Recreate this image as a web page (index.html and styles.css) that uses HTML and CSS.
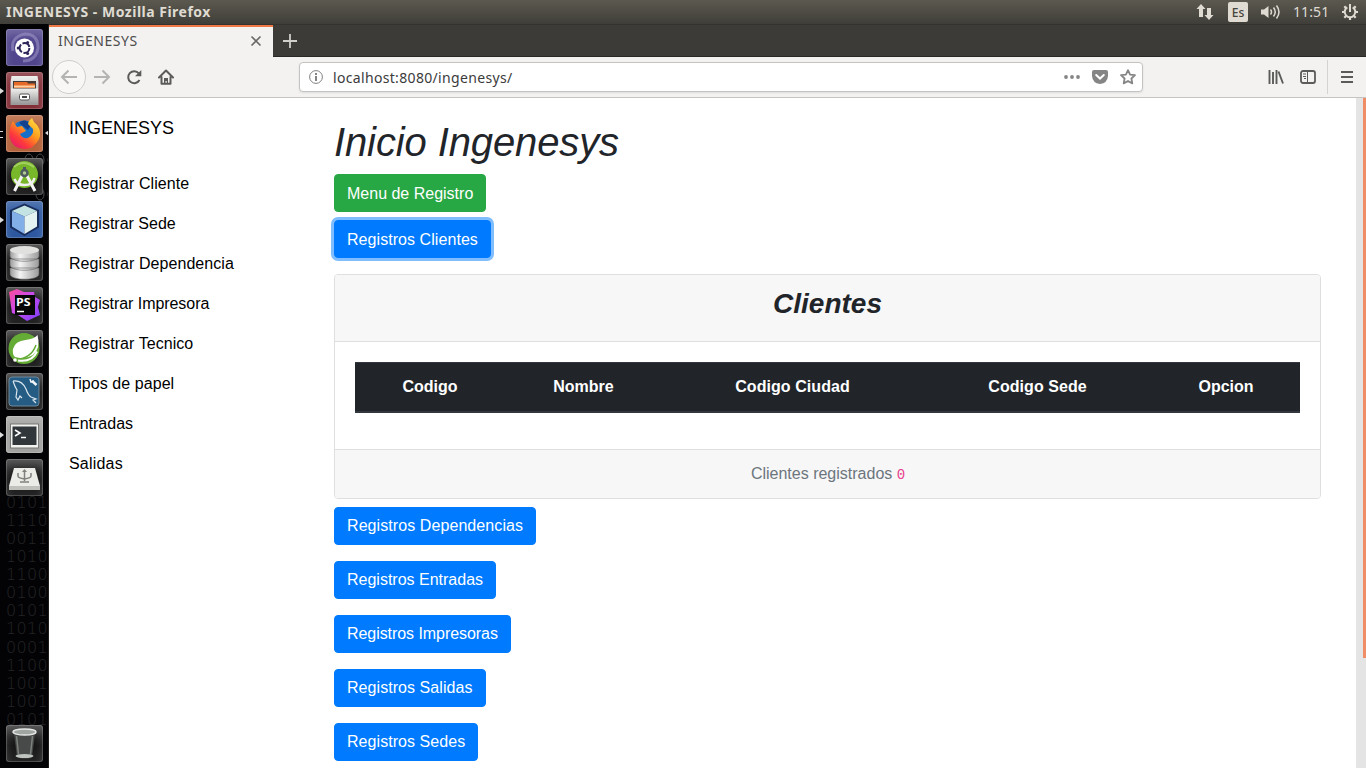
FILE: index.html
```html
<!DOCTYPE html>
<html lang="es">
<head>
<meta charset="utf-8">
<title>INGENESYS</title>
<link rel="stylesheet" href="styles.css">
</head>
<body>
<svg width="0" height="0" class="defs">
  <defs>
    <linearGradient id="silver" x1="0" y1="0" x2="0" y2="1"><stop offset="0" stop-color="#f0f0ee"/><stop offset="1" stop-color="#999"/></linearGradient>
    <linearGradient id="disk" x1="0" y1="0" x2="1" y2="0"><stop offset="0" stop-color="#9c9c9c"/><stop offset=".35" stop-color="#f4f4f4"/><stop offset="1" stop-color="#9a9a9a"/></linearGradient>
    <linearGradient id="fox" x1="1" y1="0" x2="0.2" y2="1"><stop offset="0" stop-color="#fff04a"/><stop offset=".45" stop-color="#ff9a1c"/><stop offset=".75" stop-color="#ff3a3c"/><stop offset="1" stop-color="#e5176d"/></linearGradient>
    <linearGradient id="storm" x1="0" y1="0" x2="1" y2="1"><stop offset="0" stop-color="#ff4b96"/><stop offset=".45" stop-color="#c94bf0"/><stop offset="1" stop-color="#7b3df5"/></linearGradient>
  </defs>
</svg>
<header class="panel">
  <span class="panel-title">INGENESYS - Mozilla Firefox</span>
  <div class="indicators">
    <svg width="18" height="18" viewBox="0 0 18 18" fill="#dfdbd2"><path d="M5 1l4.500 5H7v8H3V6H.5zM13 17l-4.500-5H11V5h4v7h2.500z"/></svg>
    <span class="lang">Es</span>
    <svg class="vol" width="21" height="18" viewBox="0 0 21 18"><path d="M1 6.500h3L8.500 3v12L4 11.500H1z" fill="#dfdbd2"/><path d="M10.500 6.500q2 2.500 0 5M13.500 4.500q3.500 4.500 0 9M16.500 2.500q5 6.500 0 13" fill="none" stroke="#dfdbd2" stroke-width="1.500"/></svg>
    <span class="clock">11:51</span>
    <svg width="18" height="18" viewBox="0 0 18 18" fill="none" stroke="#dfdbd2"><path d="M6.300 4.300a5.300 5.300 0 1 0 5.400 0" stroke-width="2"/><path d="M9 1v8" stroke-width="2"/><path d="M1 9h2.500M14.500 9H17M9 14.500V17M3.300 14.700l1.700-1.700M14.700 14.700L13 13M3.300 3.300L5 5M14.700 3.300L13 5" stroke-width="2.200"/></svg>
  </div>
</header>
<div class="desktop">
  <nav class="launcher">
    <svg class="rings" width="49" height="60" viewBox="0 0 49 60" fill="none" stroke="#4b4b4d"><ellipse cx="29" cy="10" rx="4" ry="6"/><ellipse cx="40" cy="10" rx="4" ry="6"/><ellipse cx="40" cy="44" rx="4" ry="6"/><path d="M49 5q-2 5 0 10M49 38q-2 6 0 12"/></svg>
    <pre class="bits">0101
1110
0011
1010
1100
0100
0101
1010
0001
1100
1001
1001
0101</pre>
    <div class="tile purple"><svg viewBox="0 0 37 37"><path d="M7 22Q4 8 19 5q13 0 13 14-2 13-15 13" fill="none" stroke="#a9a0cf" stroke-width="3" opacity=".5"/><circle cx="18.500" cy="19" r="9.500" fill="#fff"/><circle cx="18.500" cy="19" r="4.900" fill="none" stroke="#2d2459" stroke-width="2" stroke-dasharray="8.600 1.600"/><g fill="#2d2459"><circle cx="12.200" cy="19" r="1.500"/><circle cx="21.600" cy="13.400" r="1.500"/><circle cx="21.600" cy="24.600" r="1.500"/></g></svg></div>
    <div class="tile red run"><svg viewBox="0 0 37 37"><path d="M5.500 4h26l1 6v23h-28V10z" fill="url(#silver)"/><path d="M7 9h23v8H7z" fill="#443b38"/><path d="M8 10h13l1 1.500h7V16H8z" fill="#e66b28"/><path d="M8 13.500h21v2H8z" fill="#ffd1a2"/><path d="M5 16.500h27V32H5z" fill="url(#silver)"/><rect x="13.500" y="22" width="10" height="6" rx="1.500" fill="#fff" stroke="#555"/><path d="M16 25h5" stroke="#444" stroke-width="2"/></svg></div>
    <div class="tile orange run2 active"><svg viewBox="0 0 37 37"><circle cx="18" cy="18" r="12.500" fill="#176fc8"/><path d="M13 8q6-6 12 2l-3 5z" fill="#14418c"/><path d="M7 6l4 6 5-1 4 5-6 3q2 5 8 4 6-3 5-9l-5-5q1-4 4-6 1 4 5 7 5 7 2 14-5 10-15 10Q6 33 3.500 22 3 12 7 6z" fill="url(#fox)"/></svg></div>
    <div class="tile dark"><svg viewBox="0 0 37 37"><circle cx="18.500" cy="16.500" r="13.500" fill="#78b72a"/><path d="M8 9q9-8 20 0" fill="none" stroke="#a3d161" stroke-width="2"/><path d="M17 16L8.500 33M20 16L29 33" stroke="#f4f4f4" stroke-width="3"/><path d="M8.500 21q2 6 10 6 8.500 0 10-7" fill="none" stroke="#f1f1f1" stroke-width="2.500"/><circle cx="18.500" cy="15" r="3" fill="#b1cc8e" stroke="#4f5960" stroke-width="2.500"/><path d="M18.500 9v4" stroke="#4f5960" stroke-width="3"/></svg></div>
    <div class="tile blue run"><svg viewBox="0 0 37 37"><path d="M18.500 2.500L33 9v17.500L18.500 35 4 26.500V9z" fill="#182c5b"/><path d="M18.500 4.500L31 10l-12.500 5.500L6 10z" fill="#c4e4e4"/><path d="M6 10l12.500 5.500V33L6 25.500z" fill="#83afe9"/><path d="M18.500 15.500L31 10v15.500L18.500 33z" fill="#e4f3f1"/></svg></div>
    <div class="tile dark"><svg viewBox="0 0 37 37"><path d="M4 24v6c0 7 29 7 29 0v-6zM4 15v6c0 7 29 7 29 0v-6zM4 6v6c0 7 29 7 29 0V6z" fill="url(#disk)" stroke="#606060" stroke-width=".6"/><ellipse cx="18.500" cy="6" rx="14.500" ry="4" fill="#e0e0df"/></svg></div>
    <div class="tile dark"><svg viewBox="0 0 37 37"><path d="M3 5l8-3 7 3 10 0 1 5 5 3-2 7 2 8-13 6-9-6-6-2z" fill="url(#storm)"/><path d="M9 8h20v20H9z" fill="#070607"/><text x="10" y="18.500" textLength="14.500" lengthAdjust="spacingAndGlyphs" class="ps">PS</text><path d="M11 24.500h7" stroke="#fff" stroke-width="1.500"/></svg></div>
    <div class="tile dark"><svg viewBox="0 0 37 37"><circle cx="18" cy="18.500" r="15.500" fill="#65ac36"/><path d="M31.500 5q-3 4-12 5Q9 11 7 19q-1 5 2 8 10 3 18-2 8-7 4.500-20z" fill="#fff"/><path d="M9 29.500Q25 29 30 15" fill="none" stroke="#65ac36" stroke-width="1.500"/><path d="M12 30.500q14 2 19-9" fill="none" stroke="#fff" stroke-width="2"/><circle cx="9" cy="30" r="1.800" fill="#fff"/></svg></div>
    <div class="tile dark"><svg viewBox="0 0 37 37"><rect x="3" y="4" width="30" height="29" rx="3" fill="#245c84" stroke="#6f8a9d"/><path d="M7 8q9-1 13 8 2 6 5 8l5 2-3 1 3 3M7 8q2 6 4 9l-1 7 2 3 2-4 2 2" fill="none" stroke="#d9e5ed" stroke-width="1.200"/><path d="M26 8l4.500 4" stroke="#f2f5f7" stroke-width="2.500"/><path d="M24 6l1 3 3-1" fill="none" stroke="#f2f5f7" stroke-width="1.500"/></svg></div>
    <div class="tile gray run"><svg viewBox="0 0 37 37"><rect x="4.500" y="8" width="28" height="24" fill="#f2f2ef" stroke="#777"/><rect x="6.500" y="10.500" width="24" height="18.500" fill="#30363a"/><path d="M9 14l5 3-5 3" fill="none" stroke="#fff" stroke-width="1.600"/><path d="M15 21.500h5" stroke="#fff" stroke-width="1.500"/></svg></div>
    <div class="tile dark"><svg viewBox="0 0 37 37"><path d="M8 9h21l5 18v4H3v-4z" fill="#ebebe8"/><path d="M3 27h31v4H3z" fill="#c0c0bd"/><path d="M18.500 22V11M12 14v3q0 2 6.500 3 6.500-1 6.500-3v-3M14 23h9" fill="none" stroke="#80807e" stroke-width="1.500"/><path d="M16 13l2.500-3 2.500 3z" fill="#80807e"/></svg></div>
    <div class="tile dark trash"><svg viewBox="0 0 37 37"><path d="M8 8h21l-3 24q-7 3-15 0z" fill="#474a48"/><path d="M10.500 11l2 18M26.500 11l-2 18" stroke="#7d817e" stroke-width="1.500"/><ellipse cx="18.500" cy="7" rx="11.500" ry="3" fill="#a1a5a2" stroke="#e4e7e5" stroke-width="1.500"/><ellipse cx="18.500" cy="31" rx="9" ry="2" fill="#bec3bf"/></svg></div>
  </nav>
  <div class="browser">
    <div class="tabs">
      <div class="tab"><span class="tab-name">INGENESYS</span><svg width="12" height="12" viewBox="0 0 12 12"><path d="M1.500 1.500l9 9M10.500 1.500l-9 9" stroke="#696969" stroke-width="1.600"/></svg></div>
      <svg class="plus" width="14" height="14" viewBox="0 0 14 14"><path d="M7 0v14M0 7h14" stroke="#d0cfca" stroke-width="1.800"/></svg>
    </div>
    <div class="toolbar">
      <div class="back"><svg width="18" height="16" viewBox="0 0 18 16"><path d="M17 8H2M8.500 1.500L2 8l6.500 6.500" fill="none" stroke="#b4b4b3" stroke-width="2"/></svg></div>
      <svg class="forward" width="18" height="16" viewBox="0 0 18 16"><path d="M1 8h15M9.500 1.500L16 8l-6.500 6.500" fill="none" stroke="#b4b4b3" stroke-width="2"/></svg>
      <svg class="reload" width="16" height="16" viewBox="0 0 16 16"><path d="M12.800 4.300A6 6 0 1 0 13.500 11" fill="none" stroke="#5b5b59" stroke-width="2"/><path d="M15.300 1v6.300H9z" fill="#5b5b59"/></svg>
      <svg class="home" width="16" height="16" viewBox="0 0 16 16"><path d="M1 8.500L8 1.500l7 7M3.500 8v6.800h9V8" fill="none" stroke="#5b5b59" stroke-width="2" stroke-linejoin="round" stroke-linecap="round"/><path d="M6 9h4v6H8.800v-3H7.500v3H6z" fill="#5b5b59"/></svg>
      <div class="url">
        <svg width="14" height="14" viewBox="0 0 14 14"><circle cx="7" cy="7" r="6.400" fill="none" stroke="#818181"/><path d="M7 6v5M7 3v2" stroke="#777" stroke-width="1.800"/></svg>
        <span class="address">localhost:8080/ingenesys/</span>
        <svg width="16" height="16" viewBox="0 0 16 16" fill="#858585"><circle cx="2" cy="8" r="1.900"/><circle cx="8" cy="8" r="1.900"/><circle cx="14" cy="8" r="1.900"/></svg>
        <svg class="pocket" width="16" height="16" viewBox="0 0 16 16"><path d="M2 1h12q2 0 2 2v4q-.5 7-8 8Q.5 14 0 7V3q0-2 2-2z" fill="#858585"/><path d="M4.200 6L8 9.600 11.800 6" fill="none" stroke="#fff" stroke-width="2" stroke-linecap="round"/></svg>
        <svg class="star" width="16" height="16" viewBox="0 0 16 16"><path d="M8 1.200l2.100 4.400 4.900.6-3.600 3.300.9 4.900L8 12l-4.300 2.400.9-4.900L1 6.200l4.900-.6z" fill="none" stroke="#858585" stroke-width="1.800" stroke-linejoin="round"/></svg>
      </div>
      <svg class="library" width="16" height="16" viewBox="0 0 16 16"><path d="M1.500 1v14M5 3v12M8.500 1v14M10.500 2.500L15 14.500" stroke="#5b5b59" stroke-width="1.900" fill="none"/></svg>
      <svg class="sidebtn" width="16" height="16" viewBox="0 0 16 16"><rect x="1" y="2" width="14" height="12" rx="2" fill="none" stroke="#5b5b59" stroke-width="1.800"/><path d="M7.500 2v12" stroke="#5b5b59"/><path d="M3 5h3M3 7.500h3M4 9.500h2" stroke="#5b5b59"/></svg>
      <div class="menu"><svg width="12" height="12" viewBox="0 0 12 12"><path d="M0 1h12M0 6h12M0 11h12" stroke="#5b5b59" stroke-width="2"/></svg></div>
    </div>
    <div class="viewport">
      <aside class="sidebar">
        <div class="brand">INGENESYS</div>
        <ul>
          <li class="wide">Registrar Cliente</li><li>Registrar Sede</li><li class="wide">Registrar Dependencia</li><li class="tight">Registrar Impresora</li><li class="wide">Registrar Tecnico</li><li class="wide">Tipos de papel</li><li>Entradas</li><li class="wider">Salidas</li>
        </ul>
      </aside>
      <main class="content">
        <h1>Inicio Ingenesys</h1>
        <button class="btn low green">Menu de Registro</button>
        <button class="btn low focused wide">Registros Clientes</button>
        <section class="card">
          <div class="card-header"><h3>Clientes</h3></div>
          <div class="card-body">
            <table>
              <colgroup><col class="c1"><col class="c2"><col class="c3"><col class="c4"><col class="c5"></colgroup>
              <thead><tr><th>Codigo</th><th>Nombre</th><th class="wide">Codigo Ciudad</th><th class="wide">Codigo Sede</th><th>Opcion</th></tr></thead>
            </table>
          </div>
          <div class="card-footer">Clientes registrados <code>0</code></div>
        </section>
        <div class="stack">
          <button class="btn wide2">Registros Dependencias</button>
          <button class="btn">Registros Entradas</button>
          <button class="btn tight">Registros Impresoras</button>
          <button class="btn wide">Registros Salidas</button>
          <button class="btn wide">Registros Sedes</button>
        </div>
      </main>
      <div class="scrollbar"><div class="thumb"></div></div>
    </div>
  </div>
</div>
</body>
</html>
```
FILE: styles.css
```css
* { box-sizing: border-box; }
body { margin: 0; width: 1366px; height: 768px; overflow: hidden; display: flex; flex-direction: column; font-family: "Liberation Sans", Arial, sans-serif; font-size: 16px; line-height: 24px; color: #212529; background: #fff; }
svg { display: block; flex: none; }
.defs { position: absolute; }
.panel { height: 24px; flex: none; display: flex; justify-content: space-between; align-items: center; padding: 0 7px 0 6px; background: linear-gradient(#5b594f, #3f3e39); font-family: "Noto Sans", sans-serif; color: #dfdbd2; }
.panel-title { font-weight: 700; font-size: 14px; letter-spacing: .5px; white-space: nowrap; }
.indicators { display: flex; align-items: center; }
.lang { width: 20px; height: 20px; margin: 0 13px 0 13px; border-radius: 2px; background: #dfdbd2; color: #45433d; font-size: 12px; font-weight: 500; line-height: 21px; text-align: center; }
.lang { position: relative; left: 1px; }
.vol { margin-right: 12px; }
.clock { width: 35px; margin-right: 13px; font-size: 14px; letter-spacing: .1px; white-space: nowrap; }
.desktop { flex: 1; min-height: 0; display: flex; }
.launcher { position: relative; width: 49px; flex: none; padding: 5px 0 6px 5.5px; display: flex; flex-direction: column; gap: 6px; background: #030305; border-right: 1px solid #1d1c1b; overflow: hidden; }
.rings { position: absolute; left: 0; top: 126px; }
.bits { position: absolute; left: 6px; top: 470px; margin: 0; font: 200 16px/18.07px "DejaVu Sans", sans-serif; letter-spacing: .3px; color: #242426; }
.tile { position: relative; width: 37px; height: 37px; flex: none; border-radius: 3px; box-shadow: inset 0 0 0 1px rgba(255,255,255,.18), inset 0 6px 8px rgba(255,255,255,.2); }
.tile svg { width: 37px; height: 37px; }
.purple { background: #51468d; }
.red { background: #832f38; }
.orange { background: #b5633b; }
.blue { background: #2d589f; }
.dark { background: linear-gradient(#343434, #171717 55%, #242424); }
.gray { background: #a2a2a0; }
.trash { margin-top: auto; }
.run::before, .run2::before { content: ""; position: absolute; left: -6px; top: 16px; border: 3px solid transparent; border-left: 4px solid #ddd; border-right: 0; }
.run2::before { width: 3px; height: 5px; border: solid #ddd; border-width: 1.5px 0; }
.active::after { content: ""; position: absolute; left: 39px; top: 15px; border: 3px solid transparent; border-right: 4px solid #ddd; border-left: 0; }
.ps { font: 700 11px "Open Sans", sans-serif; fill: #fff; }
.browser { flex: 1; min-width: 0; display: flex; flex-direction: column; }
.tabs { height: 33px; flex: none; display: flex; align-items: center; background: #3c3b37; border-bottom: 1px solid #292824; border-top: 1px solid #33322e; }
.tab { width: 224px; height: 32px; margin-bottom: -1px; align-self: flex-start; display: flex; align-items: center; justify-content: space-between; padding: 0 11px 2px 9px; background: #f3f2f1; border-top: 2px solid #f07746; color: #4c4c4c; font: 14px "Noto Sans", sans-serif; }
.tab-name { letter-spacing: .5px; padding-bottom: 1px; }
.plus { margin-left: 10px; }
.toolbar { height: 41px; flex: none; display: flex; align-items: center; padding-left: 3px; background: #f3f2f1; border-bottom: 1px solid #c5c4c3; }
.back { width: 34px; height: 34px; display: flex; align-items: center; justify-content: center; border: 1px solid #cfcecc; border-radius: 50%; background: #f8f7f6; }
.forward { margin-left: 7px; }
.reload { margin-left: 15px; }
.home { margin-left: 16px; }
.url { width: 844px; height: 30px; margin-left: 125px; display: flex; align-items: center; padding: 0 6px 0 9px; border: 1px solid #c4c3c2; border-radius: 4px; background: #fff; font: 14px "Noto Sans", sans-serif; color: #3b3b3b; box-shadow: 0 1px 2px #ddd; }
.address { margin-left: 10px; flex: 1; letter-spacing: .33px; }
.pocket, .star { margin-left: 12px; }
.library { margin-left: 125px; }
.sidebtn { margin-left: 16px; }
.menu { width: 39px; height: 34px; margin-left: 11px; display: flex; align-items: center; padding-left: 13px; border-left: 1px solid #d4d3d2; }
.viewport { flex: 1; min-height: 0; display: flex; background: #fff; overflow: hidden; }
.sidebar { width: 285px; flex: none; padding-left: 20px; color: #000; }
.brand { height: 66px; font-size: 18px; line-height: 60px; }
.sidebar ul { list-style: none; margin: 0; padding: 0; line-height: 40px; }
.content { flex: 1; min-width: 0; padding: 20px 35px 0 0; display: flex; flex-direction: column; align-items: flex-start; }
h1 { margin: 0 0 8px; font-size: 40px; font-weight: 500; font-style: italic; line-height: 48px; letter-spacing: -.12px; }
.btn { height: 38px; flex: none; margin: 0; padding: 6px 12px; border: 1px solid #007bff; border-radius: 4px; background: #007bff; color: #fff; font: 16px/24px "Liberation Sans", Arial, sans-serif; }
.low { padding: 7px 12px 5px; }
.wide { letter-spacing: .06px; }
.wide2 { letter-spacing: .08px; }
.wider { letter-spacing: .2px; }
.tight { letter-spacing: -.06px; }
.green { margin-bottom: 8px; background: #28a745; border-color: #28a745; }
.focused { box-shadow: 0 0 0 3px rgba(0,123,255,.5); }
.card { align-self: stretch; margin: 16px 0 8px; height: 225px; flex: none; border: 1px solid #dfdfdf; border-radius: 4px; overflow: hidden; }
.card-header { height: 67px; padding: 12px 20px; background: #f7f7f7; border-bottom: 1px solid #dfdfdf; text-align: center; }
h3 { margin: 0; font-size: 28px; line-height: 33.6px; font-weight: 700; font-style: italic; }
.card-body { height: 107px; padding: 20px; }
table { width: 945px; table-layout: fixed; border-collapse: collapse; color: #fff; background: #212529; }
th { padding: 12px; line-height: 24px; border-top: 1px solid #32383e; border-bottom: 2px solid #32383e; white-space: nowrap; }
.c1 { width: 150px; } .c2 { width: 157px; } .c3 { width: 261px; } .c4 { width: 229px; } .c5 { width: 148px; }
.card-footer { height: 49px; padding: 12px 19px 12px 20px; background: #f7f7f7; border-top: 1px solid #dfdfdf; text-align: center; color: #6c757d; }
code { font: 14px "Liberation Mono", monospace; color: #e83e8c; }
.stack { display: flex; flex-direction: column; align-items: flex-start; gap: 16px; }
.scrollbar { width: 10px; flex: none; background: #e4e4e4; }
.thumb { width: 3px; height: 560px; margin-left: 7px; background: #f08d67; }
```
